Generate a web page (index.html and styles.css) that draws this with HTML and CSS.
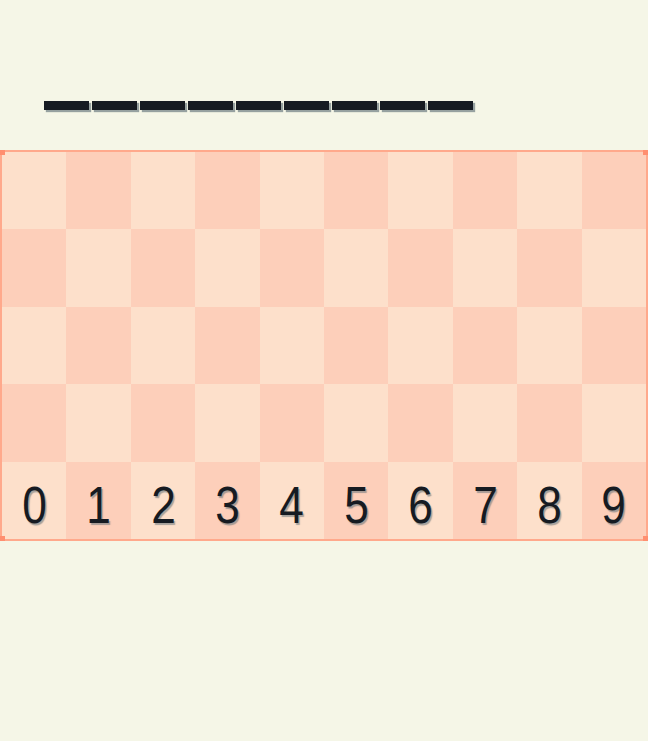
FILE: index.html
```html
<!DOCTYPE html>
<html lang="en">
<head>
    <meta charset="UTF-8">
    <title>Digits</title>
    <link rel="stylesheet" href="styles.css">
</head>
<body>
    <div class="answer">
        <span class="dash"></span><span class="dash"></span><span class="dash"></span>
        <span class="dash"></span><span class="dash"></span><span class="dash"></span>
        <span class="dash"></span><span class="dash"></span><span class="dash"></span>
    </div>

    <div class="board">
        <span class="corner tl"></span><span class="corner tr"></span>
        <span class="corner bl"></span><span class="corner br"></span>
        <div class="cell light"></div><div class="cell dark"></div><div class="cell light"></div><div class="cell dark"></div><div class="cell light"></div>
        <div class="cell dark"></div><div class="cell light"></div><div class="cell dark"></div><div class="cell light"></div><div class="cell dark"></div>

        <div class="cell dark"></div><div class="cell light"></div><div class="cell dark"></div><div class="cell light"></div><div class="cell dark"></div>
        <div class="cell light"></div><div class="cell dark"></div><div class="cell light"></div><div class="cell dark"></div><div class="cell light"></div>

        <div class="cell light"></div><div class="cell dark"></div><div class="cell light"></div><div class="cell dark"></div><div class="cell light"></div>
        <div class="cell dark"></div><div class="cell light"></div><div class="cell dark"></div><div class="cell light"></div><div class="cell dark"></div>

        <div class="cell dark"></div><div class="cell light"></div><div class="cell dark"></div><div class="cell light"></div><div class="cell dark"></div>
        <div class="cell light"></div><div class="cell dark"></div><div class="cell light"></div><div class="cell dark"></div><div class="cell light"></div>

        <div class="cell light key"><span>0</span></div><div class="cell dark key"><span>1</span></div><div class="cell light key"><span>2</span></div><div class="cell dark key"><span>3</span></div><div class="cell light key"><span>4</span></div>
        <div class="cell dark key"><span>5</span></div><div class="cell light key"><span>6</span></div><div class="cell dark key"><span>7</span></div><div class="cell light key"><span>8</span></div><div class="cell dark key"><span>9</span></div>
    </div>
</body>
</html>
```

FILE: styles.css
```css
body {
    margin: 0;
    padding: 0;
    background: #f5f6e7;
    font-family: "Liberation Sans", Arial, sans-serif;
}

.answer {
    display: flex;
    align-items: flex-start;
    gap: 3px;
    padding: 101px 0 0 44px;
    height: 150px;
    box-sizing: border-box;
}

.dash {
    width: 45px;
    height: 9px;
    background: #161b22;
    box-shadow: 2px 2px 1px rgba(110, 125, 130, 0.7);
}

.board {
    position: relative;
    display: grid;
    grid-template-columns: repeat(10, 1fr);
    grid-template-rows: repeat(5, 1fr);
    height: 387px;
    border: 2px solid #ffa98c;
    background: #fde0cc;
}

.corner {
    position: absolute;
    width: 5px;
    height: 5px;
    background: #ff8f70;
}

.tl { top: -2px; left: -2px; }
.tr { top: -2px; right: -2px; }
.bl { bottom: -2px; left: -2px; }
.br { bottom: -2px; right: -2px; }

.cell.light {
    background: #fde0cb;
}

.cell.dark {
    background: #fdcfba;
}

.key {
    display: flex;
    align-items: center;
    justify-content: center;
    padding-top: 10px;
    font-size: 52px;
    line-height: 1;
    color: #161b22;
    text-shadow: 2px 2px 1px rgba(110, 120, 125, 0.6);
}

.key span {
    display: inline-block;
    transform: scaleX(0.85);
}
```
